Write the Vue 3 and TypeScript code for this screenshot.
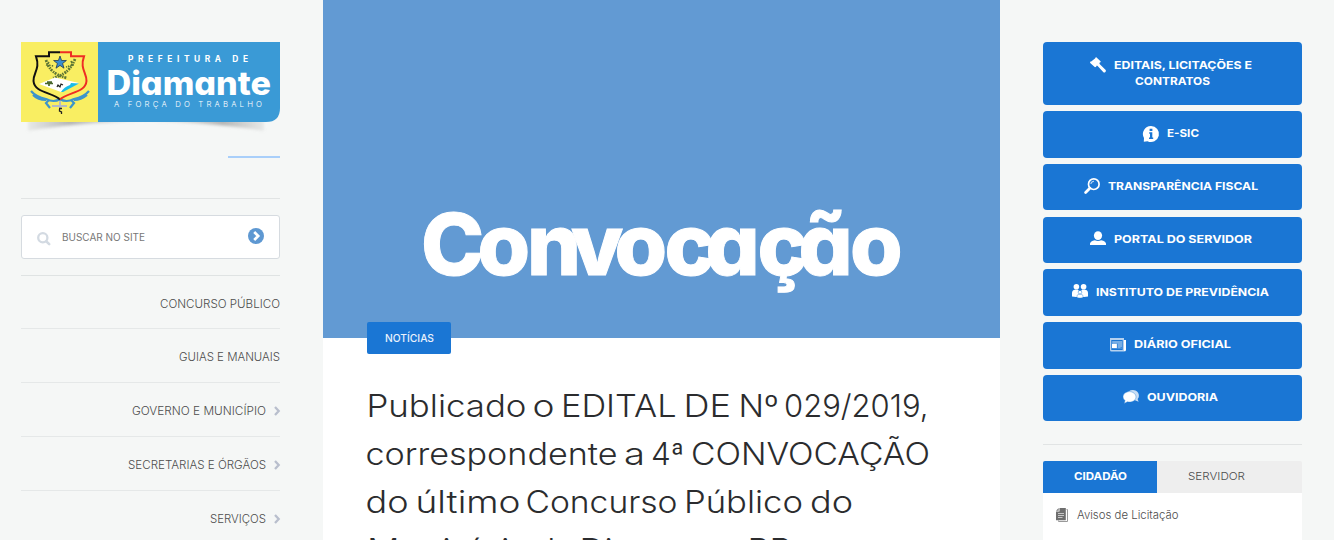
<script setup lang="ts">
import { h } from 'vue'

interface FitProps {
  text: string
  w: number
  height?: number
  base?: number
}

// One line of text fitted to an exact width.
const FitText = (p: FitProps) =>
  h('svg', { width: p.w, height: p.height ?? 16 }, [
    h(
      'text',
      { x: 0, y: p.base ?? 12, textLength: p.w, lengthAdjust: 'spacingAndGlyphs', fill: 'currentColor' },
      p.text,
    ),
  ])
FitText.props = ['text', 'w', 'height', 'base']

interface MenuItem {
  label: string
  w: number
  sub: boolean
}
const menu: MenuItem[] = [
  { label: 'CONCURSO PÚBLICO', w: 120, sub: false },
  { label: 'GUIAS E MANUAIS', w: 101, sub: false },
  { label: 'GOVERNO E MUNICÍPIO', w: 134, sub: true },
  { label: 'SECRETARIAS E ÓRGÃOS', w: 138, sub: true },
  { label: 'SERVIÇOS', w: 56, sub: true },
]

interface Word {
  t: string
  x: number
  w: number
}
const headline: Word[][] = [
  [
    { t: 'Publicado', x: -0.5, w: 160 },
    { t: 'o', x: 165.5, w: 22 },
    { t: 'EDITAL', x: 194, w: 115.5 },
    { t: 'DE', x: 316.5, w: 47.5 },
    { t: 'Nº', x: 371.5, w: 40 },
    { t: '029/2019,', x: 417, w: 144.5 },
  ],
  [
    { t: 'correspondente', x: -1.5, w: 252 },
    { t: 'a', x: 257, w: 21 },
    { t: '4ª', x: 284, w: 33 },
    { t: 'CONVOCAÇÃO', x: 324, w: 239 },
  ],
  [
    { t: 'do', x: -1.5, w: 43 },
    { t: 'último', x: 48.5, w: 105 },
    { t: 'Concurso', x: 158.5, w: 152 },
    { t: 'Público', x: 317, w: 119 },
    { t: 'do', x: 443, w: 43 },
  ],
  [
    { t: 'Município', x: 0, w: 164 },
    { t: 'de', x: 167.5, w: 41 },
    { t: 'Diamante-PB', x: 212.5, w: 212.5 },
  ],
]

interface Service {
  icon: string
  label: string
  w: number
}
const services: Service[] = [
  { icon: 'info', label: 'E-SIC', w: 32 },
  { icon: 'search', label: 'TRANSPARÊNCIA FISCAL', w: 150 },
  { icon: 'user', label: 'PORTAL DO SERVIDOR', w: 138 },
  { icon: 'group', label: 'INSTITUTO DE PREVIDÊNCIA', w: 173 },
  { icon: 'news', label: 'DIÁRIO OFICIAL', w: 97 },
  { icon: 'chat', label: 'OUVIDORIA', w: 71 },
]
</script>

<template>
  <div class="page">
    <aside class="left">
      <svg class="logo" width="259" height="96" viewBox="0 0 259 96">
        <defs>
          <linearGradient id="shadeL" x1="0" x2="1" y1="0" y2="0">
            <stop offset="0" stop-color="#999" stop-opacity=".15" />
            <stop offset=".35" stop-color="#888" stop-opacity=".6" />
            <stop offset="1" stop-color="#999" stop-opacity=".1" />
          </linearGradient>
          <linearGradient id="shadeR" x1="1" x2="0" y1="0" y2="0">
            <stop offset="0" stop-color="#999" stop-opacity=".15" />
            <stop offset=".35" stop-color="#888" stop-opacity=".6" />
            <stop offset="1" stop-color="#999" stop-opacity=".1" />
          </linearGradient>
          <filter id="soft" x="-10%" y="-50%" width="120%" height="200%"><feGaussianBlur stdDeviation="1.8" /></filter>
        </defs>
        <g filter="url(#soft)">
          <path d="M7 74H125V79Q50 81 7 89Z" fill="url(#shadeL)" />
          <path d="M125 74H243V89Q200 81 125 79Z" fill="url(#shadeR)" />
        </g>
        <path d="M77 0H259V66Q259 80 245 80H77Z" fill="#3a9ad6" />
        <path d="M0 0H77V80H0Z" fill="#f9ee62" />
        <g fill="none" stroke-width="2">
          <path d="M10 49Q15 55 25 57Q33 61 39 57Q45 61 53 57Q63 55 68 49M12 53Q17 58 25 58M66 53Q60 58 53 58M28 58L25 61L29 66M50 58L53 61L49 66" stroke="#3c94ca" stroke-width="2.2" />
          <path d="M39 10.3H28V14.3H15C19.5 27 12 31 12.5 39C13.5 51 31 50 39 57.5" stroke="#111" />
          <path d="M39 10.3H50V14.3H63C58.5 27 66 31 65.5 39C64.5 51 47 50 39 57.5" stroke="#ee2d24" />
        </g>
        <g fill="none" stroke="#5d7635" stroke-width="2.7" stroke-dasharray="2 1.1 1.4 .8">
          <path d="M25 18C28 28 34 33 46 36" />
          <path d="M54 17C50 27 44 33 32 36" />
          <path d="M28 20L26 23L33 24M50 19L52 23L45 25" stroke-width="1.6" />
        </g>
        <path d="M39 14l1.6 4.5h4.8l-3.8 3 1.4 4.7-4-2.8-4 2.8 1.4-4.7-3.8-3h4.8Z" fill="#3a8dce" stroke="#263a4c" stroke-width=".8" />
        <path d="M18 42L34 35.5L58 41L40 50Z" fill="#fff" />
        <path d="M40 50Q43 45 49 43L50 41L58 41.5L42 50Z" fill="#18bce8" />
        <path d="M24 41.5h8M26 40h5M28 40v4" stroke="#49672d" stroke-width="1.7" />
        <path d="M36 45l1-2 2 2 1-3 2 1" fill="none" stroke="#222" stroke-width="1.2" />
        <path d="M31 64H46M39 59V67" stroke="#b4bac4" stroke-width="2" />
        <path d="M38 66.5h3M38.5 67v2l2 1v2" fill="none" stroke="#222" stroke-width="1.3" />
        <g fill="#fff">
          <text class="lg-top" x="107" y="20" textLength="120" lengthAdjust="spacing">PREFEITURA DE</text>
          <text class="lg-name" x="85.5" y="52.5" textLength="164.5" lengthAdjust="spacingAndGlyphs">Diamante</text>
          <text class="lg-sub" x="93" y="65" textLength="148" lengthAdjust="spacing">A FORÇA DO TRABALHO</text>
        </g>
      </svg>
      <div class="accent"></div>
      <div class="rule"></div>
      <div class="find">
        <svg width="14" height="14" viewBox="0 0 14 14">
          <circle cx="5.8" cy="5.8" r="4.6" fill="none" stroke="#d3dae2" stroke-width="2.3" />
          <path d="M9.3 9.3L12.2 12.2" stroke="#d3dae2" stroke-width="2.6" stroke-linecap="round" />
        </svg>
        <FitText class="ph" text="BUSCAR NO SITE" :w="83" />
        <svg class="go" width="16" height="16" viewBox="0 0 16 16">
          <circle cx="8" cy="8" r="8" fill="#5e98d2" />
          <path d="M6.2 4L10.2 8L6.2 12" fill="none" stroke="#fff" stroke-width="2.7" />
        </svg>
      </div>
      <nav class="menu">
        <a v-for="m in menu" :key="m.label" class="item">
          <FitText :text="m.label" :w="m.w" />
          <svg v-if="m.sub" class="chev" width="6" height="10" viewBox="0 0 6 10">
            <path d="M1 1L4.7 5L1 9" fill="none" stroke="#b9bfcd" stroke-width="2.3" />
          </svg>
        </a>
      </nav>
    </aside>

    <main class="main">
      <svg class="banner" width="677" height="338" viewBox="0 0 677 338">
        <text x="98 154.5 204 248 291.5 341.5 382.5 434.5 475.5 527" y="275">Convocação</text>
      </svg>
      <div class="tag"><FitText text="NOTÍCIAS" :w="49" /></div>
      <h1 class="title">
        <svg v-for="(line, i) in headline" :key="i" width="570" height="48">
          <text
            v-for="word in line"
            :key="word.x"
            :x="word.x"
            y="35"
            :textLength="word.w"
            lengthAdjust="spacingAndGlyphs"
            fill="currentColor"
          >{{ word.t }}</text>
        </svg>
      </h1>
    </main>

    <aside class="right">
      <div class="services">
        <a class="btn first">
          <div class="line">
            <svg width="16" height="16" viewBox="0 0 16 16" fill="#fff">
              <path d="M6 0L10.8 4.4L10.2 5.6L9.4 5.8L9.6 7L15.7 13Q16.3 14 15.4 15Q14.4 16 13.4 15.2L7.4 8.8L6.4 8.7L6.2 9.8L5 10.2L.2 6L0 4.8L1.2 4.6L5 1.5Z" />
            </svg>
            <FitText text="EDITAIS, LICITAÇÕES E" :w="138" />
          </div>
          <FitText text="CONTRATOS" :w="75" />
        </a>
        <a v-for="s in services" :key="s.icon" class="btn" :class="s.icon">
          <div class="line">
            <svg width="16" height="16" viewBox="0 0 16 16" fill="#fff">
              <template v-if="s.icon === 'info'">
                <path d="M8 0A8 8 0 1 1 4.5 15.2L.8 15.7L1 12A8 8 0 0 1 8 0Z" />
                <path d="M6.2 6.3H9.3V11.5H10.2V13H6V11.5H7V7.7H6.2Z M6.6 2.8H9.4V5.1H6.6Z" fill="#1a76d4" />
              </template>
              <template v-else-if="s.icon === 'search'">
                <circle cx="9.8" cy="6.2" r="5.3" fill="none" stroke="#fff" stroke-width="1.7" />
                <path d="M6.8 6Q7.3 3.4 10 3.2" fill="none" stroke="#b9d5f1" stroke-width="1.1" />
                <path d="M5.8 10.2L1.6 14.4" stroke="#fff" stroke-width="2.8" stroke-linecap="round" />
              </template>
              <template v-else-if="s.icon === 'user'">
                <ellipse cx="8" cy="4.6" rx="4.1" ry="4.4" />
                <path d="M0 14V12.6Q.5 9.8 4.8 9.2Q8 10.8 11.2 9.2Q15.5 9.8 16 12.6V14Z" />
              </template>
              <template v-else-if="s.icon === 'group'">
                <circle cx="4.4" cy="2.8" r="2.8" />
                <circle cx="11.6" cy="2.8" r="2.8" />
                <path d="M0 12.5V9Q0 6 3 5.8H6L8 8L10 5.8H13Q16 6 16 9V12.5L12 13H4Z" />
                <circle cx="8" cy="8.2" r="1.8" stroke="#1a76d4" stroke-width=".5" />
                <path d="M5 13.5V12Q5 10.4 7 10.4H9Q11 10.4 11 12V13.5Q8 14.7 5 13.5Z" stroke="#1a76d4" stroke-width=".4" />
              </template>
              <template v-else-if="s.icon === 'news'">
                <path d="M0 2H14V4H16V14Q16 15.5 14 15.5H1.5Q0 15.5 0 14Z" fill="#b5d1ef" />
                <path d="M1.3 4H12.7V14H1.3Z" fill="#1a76d4" />
                <path d="M2.2 5H12V12.5H2.2Z" fill="#77ade4" />
                <path d="M2 8H6.8V12H2Z M14 4H16V14Q15.5 15 14 15Z" />
                <path d="M7.5 7.5V12.5M10.5 11.5H12" stroke="#1a76d4" stroke-width=".6" />
              </template>
              <template v-else>
                <path d="M5.5 2.4Q9 .2 12.5 1.5Q16 3.2 15.9 7Q15.8 9 14.6 10L15.6 12.8L12 11.2Z" fill="#c9def4" />
                <path d="M6.5 2.6C10 2.6 13 5 13 8S10 13 6.5 13Q5.5 13 4.5 12.8L1.2 14.4L2 11.5Q0 10 0 8C0 5 3 2.6 6.5 2.6Z" stroke="#1a76d4" stroke-width=".4" />
              </template>
            </svg>
            <FitText :text="s.label" :w="s.w" />
          </div>
        </a>
      </div>
      <div class="rule"></div>
      <div class="tabs">
        <div class="tab on"><FitText text="CIDADÃO" :w="53" /></div>
        <div class="tab"><FitText text="SERVIDOR" :w="57" /></div>
      </div>
      <div class="panel">
        <svg width="12" height="14" viewBox="0 0 12 14">
          <path d="M10.5 1.5H11.5V13.5H2.5V12.5" fill="none" stroke="#999" />
          <path d="M3.5 0H9.8V12.3H0V3.5H3.5Z" fill="#6e6e6e" />
          <path d="M0 2.7L2.7 0V2.7Z" fill="#777" />
          <path d="M2 5.5H8M2 7.5H8M2 9.5H6.5" stroke="#d0d0d0" stroke-width=".9" />
        </svg>
        <FitText text="Avisos de Licitação" :w="101.5" />
      </div>
    </aside>
  </div>
</template>

<style>
body { margin: 0; overflow: hidden; background: #f5f7f6; }
</style>

<style scoped>
.page { display: flex; gap: 43px; width: 1334px; height: 540px; box-sizing: border-box; padding: 0 32px 0 21px; overflow: hidden; background: #f5f7f6; color: #4c4c4c; font-family: Inter, "Liberation Sans", sans-serif; font-size: 11.4px; font-weight: 300; }
svg { display: block; flex: none; overflow: visible; }
.left, .right { width: 259px; flex: none; padding-top: 42px; }
.rule { height: 1px; background: #e1e4e4; }
.lg-top { font-size: 8.4px; font-weight: 700; }
.lg-name { font-size: 33.5px; font-weight: 800; font-feature-settings: "cv11"; }
.lg-sub { font-size: 7.8px; font-weight: 300; }
.accent { width: 52px; height: 2px; margin: 18px 0 40px auto; background: #a9cffa; }
.find { display: flex; box-sizing: border-box; height: 44px; margin: 16px 0; padding: 13px 14px 0 15px; border: 1px solid #d6dbe0; border-radius: 3px; background: #fff; }
.find > svg:first-child { margin-top: 3px; }
.ph { margin: 0 0 0 11px; font-size: 9.7px; font-weight: 400; color: #777; }
.find .go { margin: -1px 1px 0 auto; }
.item { display: flex; box-sizing: border-box; height: 54px; padding-top: 20px; justify-content: flex-end; border-top: 1px solid #e5e8e8; }
.item:first-child { height: 53px; border-color: #dfe3e3; }
.chev { margin: 3px 0 0 8px; }
.main { width: 677px; flex: none; background: #fff; }
.banner { background: #629ad3; fill: #fff; stroke: #fff; stroke-width: 1px; font-size: 85px; font-weight: 800; font-feature-settings: "cv11"; }
.tag { position: relative; display: flex; width: 84px; height: 32px; margin: -16px 0 0 44px; box-sizing: border-box; padding: 8px 0 0 17.5px; border-radius: 2px; background: #1a76d4; color: #eaf2fc; font-size: 10.6px; font-weight: 500; }
.title { margin: 28px 0 0 44px; color: #2b2c2e; font-size: 30.8px; font-weight: 300; }
.services { display: grid; grid-template-rows: 63px 47px 47px 46px 47px 47px 46px; gap: 6px; margin-bottom: 23px; }
.btn { display: flex; flex-direction: column; align-items: center; box-sizing: border-box; padding-top: 14px; border-radius: 4px; background: #1a76d4; color: #fff; font-size: 11px; font-weight: 700; }
.btn.first { padding-top: 15px; }
.btn.search { height: 46px; }
.btn.group { padding-top: 15px; }
.btn.info .line > svg:first-child { margin-top: 1px; }
.line { display: flex; gap: 8px; padding-right: 4px; }
.tabs { display: flex; height: 32px; margin-top: 16px; background: #eee; border-radius: 2px 2px 0 0; overflow: hidden; font-size: 10.6px; }
.tab { box-sizing: border-box; padding: 7px 0 0 31px; }
.tab.on { width: 114px; background: #1a76d4; color: #fff; font-weight: 700; }
.panel { display: flex; gap: 9px; height: 60px; padding: 14px 13px 0; background: #fff; font-size: 11px; }
.panel > svg:first-child { margin-top: 1px; }
</style>
